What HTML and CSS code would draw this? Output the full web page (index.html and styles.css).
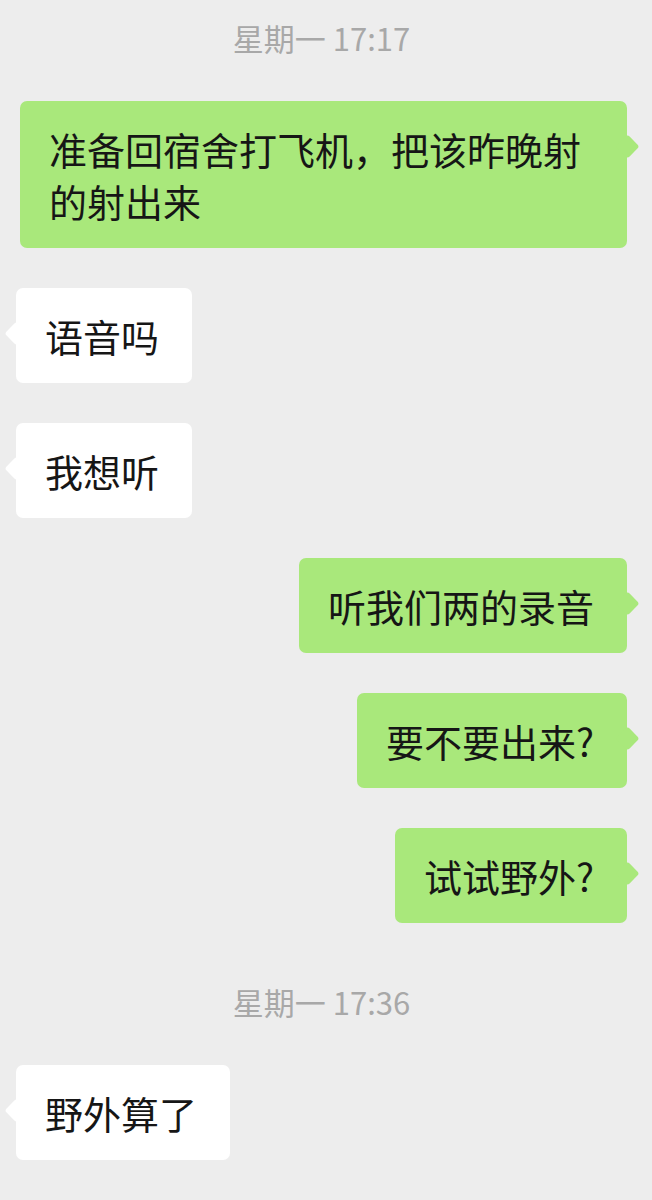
FILE: index.html
```html
<!DOCTYPE html>
<html lang="zh-CN">
<head>
    <meta charset="UTF-8">
    <meta name="viewport" content="width=device-width, initial-scale=1.0">
    <title>聊天</title>
    <link rel="stylesheet" href="styles.css">
</head>
<body>
    <div class="chat">
        <div class="time">星期一 17:17</div>

        <div class="msg mine">
            <div class="bubble">准备回宿舍打飞机，把该昨晚射的射出来</div>
        </div>
        <div class="msg theirs">
            <div class="bubble">语音吗</div>
        </div>
        <div class="msg theirs">
            <div class="bubble">我想听</div>
        </div>
        <div class="msg mine">
            <div class="bubble">听我们两的录音</div>
        </div>
        <div class="msg mine">
            <div class="bubble">要不要出来?</div>
        </div>
        <div class="msg mine">
            <div class="bubble">试试野外?</div>
        </div>

        <div class="time later">星期一 17:36</div>

        <div class="msg theirs">
            <div class="bubble">野外算了</div>
        </div>
    </div>
</body>
</html>
```

FILE: styles.css
```css
body {
    margin: 0;
    padding: 0;
    background-color: #ededed;
    font-family: "Noto Sans CJK SC", "Noto Sans", sans-serif;
    color: #161616;
}

.chat {
    display: flex;
    flex-direction: column;
    padding: 18px 25px 0 16px;
}

.time {
    text-align: center;
    font-size: 31px;
    line-height: 40px;
    color: #a8a8a8;
    margin-bottom: 43px;
}

.time.later {
    margin-top: 19px;
}

.msg {
    display: flex;
    margin-bottom: 40px;
}

.msg.mine {
    justify-content: flex-end;
}

.msg.theirs {
    justify-content: flex-start;
}

.bubble {
    position: relative;
    max-width: 545px;
    padding: 22px 33px 21px 29px;
    font-size: 38px;
    line-height: 52px;
    border-radius: 7px;
    background-color: #fff;
}

.mine .bubble {
    background-color: #a9e87b;
}

/* little tail on the side of the bubble */
.bubble::before {
    content: "";
    position: absolute;
    top: 37px;
    width: 17px;
    height: 17px;
    border-radius: 3px;
    background-color: inherit;
    transform: rotate(45deg);
}

.mine .bubble::before {
    right: -9px;
}

.theirs .bubble::before {
    left: -8px;
}
```
